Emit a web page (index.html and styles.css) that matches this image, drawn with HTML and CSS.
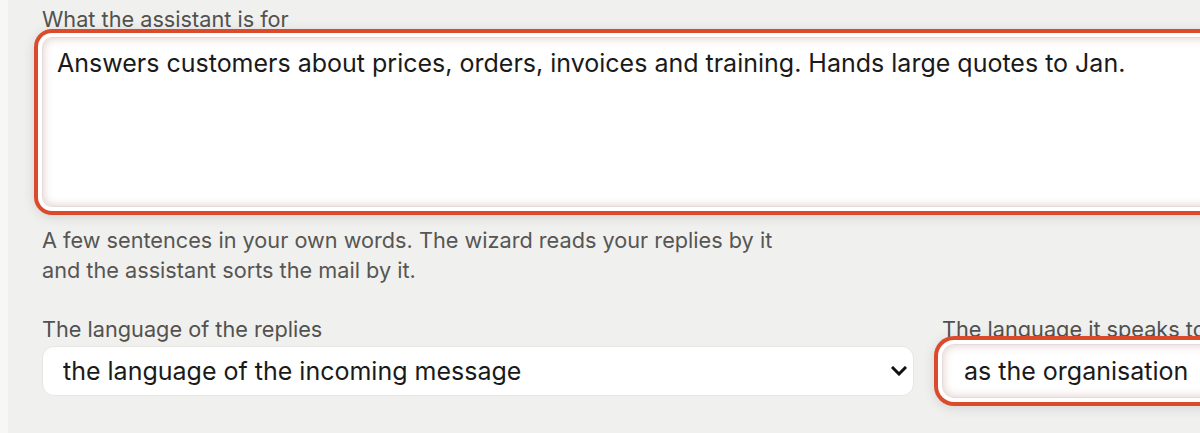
FILE: index.html
```html
<!DOCTYPE html>
<html lang="en">
<head>
<meta charset="utf-8">
<title>Assistant settings</title>
<link rel="stylesheet" href="styles.css">
</head>
<body>
<div class="panel">
  <div class="form">
    <div class="field">
      <label class="label" for="purpose">What the assistant is for</label>
      <div class="ta-wrap">
        <textarea id="purpose" class="textarea focus">Answers customers about prices, orders, invoices and training. Hands large quotes to Jan.</textarea>
      </div>
      <p class="help">A few sentences in your own words. The wizard reads your replies by it<br>and the assistant sorts the mail by it.</p>
    </div>
    <div class="row">
      <div class="field">
        <label class="label" for="lang">The language of the replies</label>
        <div class="select-wrap">
          <select id="lang" class="select">
            <option>the language of the incoming message</option>
          </select>
          <svg class="chev" width="16" height="10" viewBox="0 0 16 10"><path d="M2 2 L8 8 L14 2" fill="none" stroke="#111" stroke-width="3" stroke-linecap="square"/></svg>
        </div>
      </div>
      <div class="field">
        <label class="label" for="tone">The language it speaks to customers</label>
        <div class="select-wrap">
          <select id="tone" class="select focus tall">
            <option>as the organisation</option>
          </select>
          <svg class="chev" width="16" height="10" viewBox="0 0 16 10"><path d="M2 2 L8 8 L14 2" fill="none" stroke="#111" stroke-width="3" stroke-linecap="square"/></svg>
        </div>
      </div>
    </div>
  </div>
</div>
</body>
</html>
```

FILE: styles.css
```css
html, body {
  margin: 0;
  padding: 0;
  background: #f7f7f6;
  overflow: hidden;
  height: 433px;
}

body {
  font-family: Inter, "Noto Sans", sans-serif;
}

.panel {
  margin-left: 8px;
  background: #f0f0ee;
  height: 433px;
  padding: 4px 0 0 34px;
  box-sizing: border-box;
}

.form {
  width: 1772px;
}

.field {
  display: flex;
  flex-direction: column;
}

.label {
  font-size: 21.7px;
  line-height: 30px;
  color: #525250;
}

.ta-wrap {
  margin-top: 3px;
}

.textarea {
  display: block;
  box-sizing: border-box;
  width: 100%;
  height: 170px;
  padding: 7px 14px;
  border: 1px solid #e3dcdb;
  border-radius: 10px;
  background: #fff;
  font-family: Inter, "Noto Sans", sans-serif;
  font-size: 25px;
  line-height: 36px;
  color: #1a1a1a;
  resize: none;
  outline: none;
}

.focus {
  box-shadow:
    inset 0 0 10px rgba(160, 90, 80, 0.32),
    0 0 0 4px #ffffff,
    0 0 0 8px #dc4a2c,
    0 2px 14px 6px rgba(0, 0, 0, 0.16);
}

.help {
  margin: 18px 0 0;
  font-size: 21.7px;
  line-height: 30px;
  color: #565654;
}

.row {
  display: grid;
  grid-template-columns: 872px 830px;
  column-gap: 28px;
  margin-top: 29px;
}

.select-wrap {
  position: relative;
  margin-top: 2px;
}

.select {
  display: block;
  box-sizing: border-box;
  width: 100%;
  height: 50px;
  padding: 0 40px 0 20px;
  border: 1px solid #e6e6e3;
  border-radius: 12px;
  background: #fff;
  font-family: Inter, "Noto Sans", sans-serif;
  font-size: 25px;
  color: #1a1a1a;
  appearance: none;
  -webkit-appearance: none;
  outline: none;
}

.select.tall {
  height: 54px;
  margin-top: -2px;
  padding-left: 21px;
  border-color: #e3dcdb;
}

.chev {
  position: absolute;
  right: 7px;
  top: 20px;
}
```
